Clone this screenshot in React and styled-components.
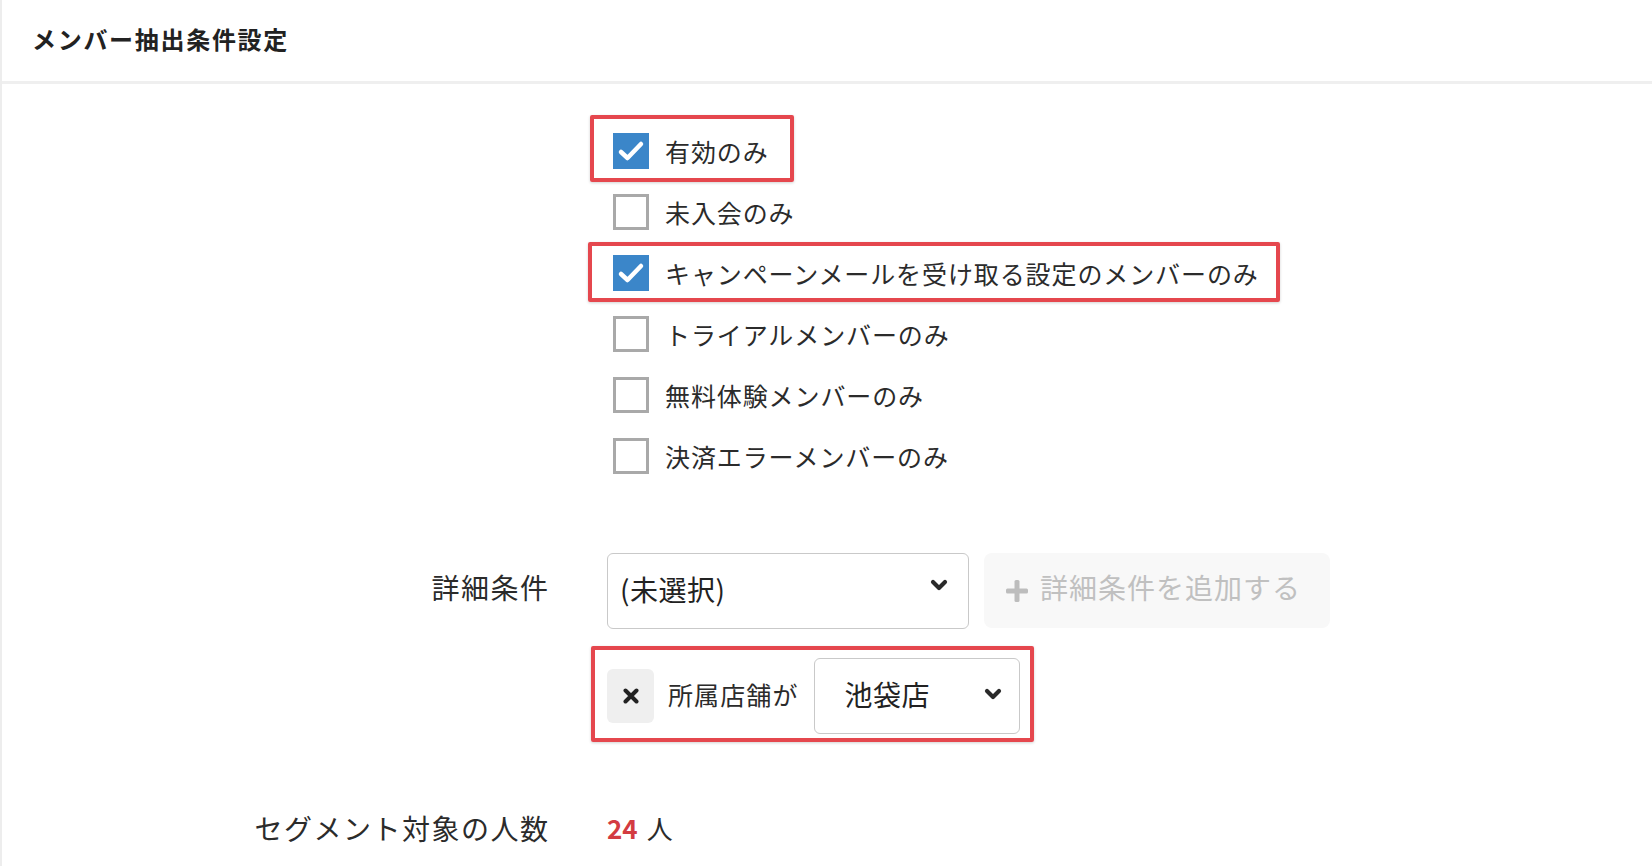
import React from 'react';
import styled, { createGlobalStyle } from 'styled-components';

const GlobalStyle = createGlobalStyle`
  body {
    margin: 0;
    background: #ffffff;
    font-family: 'Noto Sans CJK JP', 'Noto Sans', sans-serif;
    color: #2b2b2b;
  }
`;

const filters = [
  { label: '有効のみ', checked: true, pad: [14, 21, 9, 19] },
  { label: '未入会のみ', checked: false },
  { label: 'キャンペーンメールを受け取る設定のメンバーのみ', checked: true, pad: [9, 17, 7, 21] },
  { label: 'トライアルメンバーのみ', checked: false },
  { label: '無料体験メンバーのみ', checked: false },
  { label: '決済エラーメンバーのみ', checked: false },
];

function Chevron({ lift = 0 }) {
  return (
    <ChevronIcon width="18" height="12" viewBox="0 0 18 12" $lift={lift}>
      <polyline points="3,3 9,9 15,3" fill="none" stroke="#2a2a2a" strokeWidth="4.2" strokeLinecap="round" strokeLinejoin="round" />
    </ChevronIcon>
  );
}

function CheckItem({ label, checked }) {
  return (
    <Item>
      <Box $checked={checked}>
        {checked && (
          <svg width="36" height="36" viewBox="0 0 36 36">
            <polyline points="8,19 14.5,25 28,11" fill="none" stroke="#ffffff" strokeWidth="4.5" strokeLinecap="round" strokeLinejoin="round" />
          </svg>
        )}
      </Box>
      <ItemText>{label}</ItemText>
    </Item>
  );
}

export default function App() {
  return (
    <>
      <GlobalStyle />
      <Card>
        <Header>
          <Title>メンバー抽出条件設定</Title>
        </Header>
        <Body>
          <Row>
            <Label />
            <CheckList>
              {filters.map((f) =>
                f.pad ? (
                  <Highlight key={f.label} $pad={f.pad}>
                    <CheckItem label={f.label} checked={f.checked} />
                  </Highlight>
                ) : (
                  <CheckItem key={f.label} label={f.label} checked={f.checked} />
                )
              )}
            </CheckList>
          </Row>

          <Row $top={79}>
            <Label $tall>詳細条件</Label>
            <DetailColumn>
              <SelectRow>
                <Select $width={362} $left={12} $right={20}>
                  <SelectText>(未選択)</SelectText>
                  <Chevron lift={4} />
                </Select>
                <AddButton>
                  <svg width="22" height="22" viewBox="0 0 22 22">
                    <rect x="8.5" y="0" width="5" height="22" rx="1.5" fill="#bdbdbd" />
                    <rect x="0" y="8.5" width="22" height="5" rx="1.5" fill="#bdbdbd" />
                  </svg>
                  詳細条件を追加する
                </AddButton>
              </SelectRow>
              <Highlight $pad={[8, 10, 4, 12]}>
                <ConditionGroup>
                  <RemoveButton>
                    <svg width="16" height="16" viewBox="0 0 16 16">
                      <path d="M2.5 2.5 L13.5 13.5 M13.5 2.5 L2.5 13.5" stroke="#222" strokeWidth="4" strokeLinecap="round" />
                    </svg>
                  </RemoveButton>
                  <ConditionText>所属店舗が</ConditionText>
                  <Select $width={206} $left={30} $right={17}>
                    <SelectText>池袋店</SelectText>
                    <Chevron />
                  </Select>
                </ConditionGroup>
              </Highlight>
            </DetailColumn>
          </Row>

          <Row $top={76}>
            <Label>セグメント対象の人数</Label>
            <Count>
              <Number>24</Number>
              <Unit>人</Unit>
            </Count>
          </Row>
        </Body>
      </Card>
    </>
  );
}

const Card = styled.div`
  min-height: 100vh;
  border-left: 2px solid #ededed;
  box-sizing: border-box;
`;

const Header = styled.div`
  height: 84px;
  box-sizing: border-box;
  display: flex;
  align-items: center;
  padding: 0 0 4px 30px;
  border-bottom: 3px solid #efefef;
`;

const Title = styled.h1`
  margin: 0;
  font-size: 24px;
  font-weight: 700;
  letter-spacing: 1.7px;
  color: #222;
`;

const Body = styled.div`
  padding-top: 49px;
`;

const Row = styled.div`
  display: grid;
  grid-template-columns: 546px 1fr;
  column-gap: 59px;
  align-items: start;
  margin-top: ${(p) => p.$top || 0}px;
`;

const Label = styled.div`
  text-align: right;
  font-size: 28px;
  letter-spacing: 1.5px;
  line-height: ${(p) => (p.$tall ? '69px' : '36px')};
  margin-right: -1.5px;
`;

const CheckList = styled.div`
  display: flex;
  flex-direction: column;
  align-items: flex-start;
  gap: 25px;
  padding-left: 6px;
`;

const Highlight = styled.div`
  align-self: flex-start;
  border: 4px solid #e5474e;
  border-radius: 2px;
  box-shadow: 0 1px 3px rgba(0, 0, 0, 0.18);
  padding: ${(p) => p.$pad.map((v) => `${v}px`).join(' ')};
  margin: ${(p) => p.$pad.map((v) => `${-(v + 4)}px`).join(' ')};
`;

const Item = styled.label`
  display: flex;
  align-items: center;
  gap: 16px;
  height: 36px;
`;

const Box = styled.span`
  width: 36px;
  height: 36px;
  box-sizing: border-box;
  flex-shrink: 0;
  display: flex;
  background: ${(p) => (p.$checked ? '#3b86c9' : '#ffffff')};
  border: ${(p) => (p.$checked ? 'none' : '3px solid #a9a9a9')};
`;

const ItemText = styled.span`
  font-size: 25px;
  letter-spacing: 0.9px;
  line-height: 36px;
  white-space: nowrap;
`;

const DetailColumn = styled.div`
  display: flex;
  flex-direction: column;
  align-items: flex-start;
  gap: 29px;
`;

const SelectRow = styled.div`
  display: flex;
  gap: 15px;
`;

const Select = styled.div`
  width: ${(p) => p.$width}px;
  height: 76px;
  box-sizing: border-box;
  border: 1.5px solid #c9c9c9;
  border-radius: 6px;
  display: flex;
  align-items: center;
  justify-content: space-between;
  padding: 0 ${(p) => p.$right}px 5px ${(p) => p.$left}px;
  background: #fff;
`;

const ChevronIcon = styled.svg`
  flex-shrink: 0;
  margin-top: ${(p) => -p.$lift * 2 - 5}px;
  margin-bottom: -5px;
`;

const SelectText = styled.span`
  font-size: 28px;
  letter-spacing: 0.5px;
  color: #222;
`;

const AddButton = styled.div`
  width: 346px;
  height: 75px;
  box-sizing: border-box;
  border-radius: 8px;
  background: #f8f8f8;
  display: flex;
  align-items: center;
  gap: 12px;
  padding: 0 0 7px 22px;
  font-size: 28px;
  letter-spacing: 1px;
  color: #c0c0c0;

  svg {
    margin-top: 7px;
  }
`;

const ConditionGroup = styled.div`
  display: flex;
  align-items: center;
`;

const RemoveButton = styled.div`
  width: 47px;
  height: 54px;
  border-radius: 6px;
  background: #efefef;
  display: flex;
  align-items: center;
  justify-content: center;
`;

const ConditionText = styled.span`
  font-size: 25px;
  letter-spacing: 1.1px;
  margin: 0 15px 4px 14px;
`;

const Count = styled.div`
  display: flex;
  align-items: baseline;
  line-height: 36px;
`;

const Number = styled.span`
  font-size: 26px;
  font-weight: 700;
  color: #d33b41;
`;

const Unit = styled.span`
  font-size: 26px;
  margin-left: 9px;
`;
